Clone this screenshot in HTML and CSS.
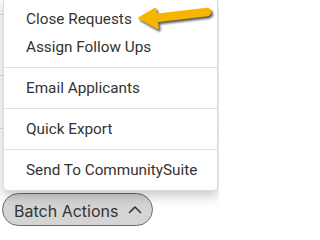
FILE: index.html
```html
<!DOCTYPE html>
<html>
<head>
<meta charset="utf-8">
<link rel="stylesheet" href="styles.css">
</head>
<body>
<div class="page">
  <div class="table">
    <div class="row r1"></div>
    <div class="row r2"></div>
    <div class="row r3"></div>
    <div class="row r4"></div>
  </div>
  <div class="actions">
    <button class="batch">
      <span class="batch-label">Batch Actions</span>
      <svg class="chev" width="14" height="9" viewBox="0 0 14 9"><path d="M1.5 7.5 L7 2 L12.5 7.5" fill="none" stroke="#333" stroke-width="1.6" stroke-linecap="round" stroke-linejoin="round"/></svg>
    </button>
  </div>
  <div class="menu">
    <div class="group">
      <div class="item">Close Requests</div>
      <div class="item">Assign Follow Ups</div>
    </div>
    <div class="group">
      <div class="item">Email Applicants</div>
    </div>
    <div class="group">
      <div class="item">Quick Export</div>
    </div>
    <div class="group">
      <div class="item">Send To CommunitySuite</div>
    </div>
  </div>
  <svg class="pointer" width="80" height="34" viewBox="0 0 80 34">
    <defs>
      <filter id="blur" x="-20%" y="-40%" width="140%" height="180%">
        <feGaussianBlur stdDeviation="1.3"/>
      </filter>
    </defs>
    <g transform="translate(1.8,2.2)" filter="url(#blur)" opacity="0.75">
      <path d="M16 17.5 L71 11" stroke="#222" stroke-width="8.5" stroke-linecap="round" fill="none"/>
      <path d="M3.5 17 L19 8 L21.5 27 Z" fill="#222" stroke="#222" stroke-width="2.5" stroke-linejoin="round"/>
    </g>
    <path d="M16 17.5 L71 11" stroke="#f7b500" stroke-width="8.5" stroke-linecap="round" fill="none"/>
    <path d="M3.5 17 L19 8 L21.5 27 Z" fill="#f7b500" stroke="#f7b500" stroke-width="2.5" stroke-linejoin="round"/>
  </svg>
</div>
</body>
</html>
```

FILE: styles.css
```css
html, body {
  margin: 0;
  padding: 0;
  background: #fff;
}
.page {
  position: relative;
  width: 219px;
  height: 228px;
  overflow: hidden;
  font-family: Roboto, "Liberation Sans", sans-serif;
}
.table {
  display: flex;
  flex-direction: column;
}
.row {
  border-bottom: 1px solid #dcdcdc;
  box-sizing: border-box;
}
.r1 { height: 15px; }
.r2 { height: 61px; }
.r3 { height: 53px; }
.r4 { height: 64px; border-bottom: none; }
.actions {
  padding-left: 2px;
}
.batch {
  display: inline-flex;
  align-items: center;
  gap: 10px;
  box-sizing: border-box;
  height: 33px;
  width: 151px;
  padding: 2px 0 0 11px;
  border: 1px solid #6a6a6a;
  border-radius: 17px;
  background: #d4d4d4;
  color: #333;
  font-family: Inter, "Noto Sans", sans-serif;
  font-size: 16px;
  cursor: pointer;
}
.chev {
  display: block;
  margin-top: -3px;
}
.menu {
  position: absolute;
  left: 3px;
  top: -2px;
  width: 215px;
  box-sizing: border-box;
  background: #fff;
  border: 1px solid #dcdcdc;
  border-radius: 0 0 4px 4px;
  box-shadow: 0 5px 12px rgba(0, 0, 0, 0.22);
}
.group {
  padding: 6px 0;
}
.group + .group {
  border-top: 1px solid #e0e0e0;
}
.item {
  height: 28px;
  line-height: 29px;
  padding-left: 22px;
  font-size: 15.3px;
  color: #333;
  white-space: nowrap;
}
.pointer {
  position: absolute;
  left: 136px;
  top: 1px;
}
```
